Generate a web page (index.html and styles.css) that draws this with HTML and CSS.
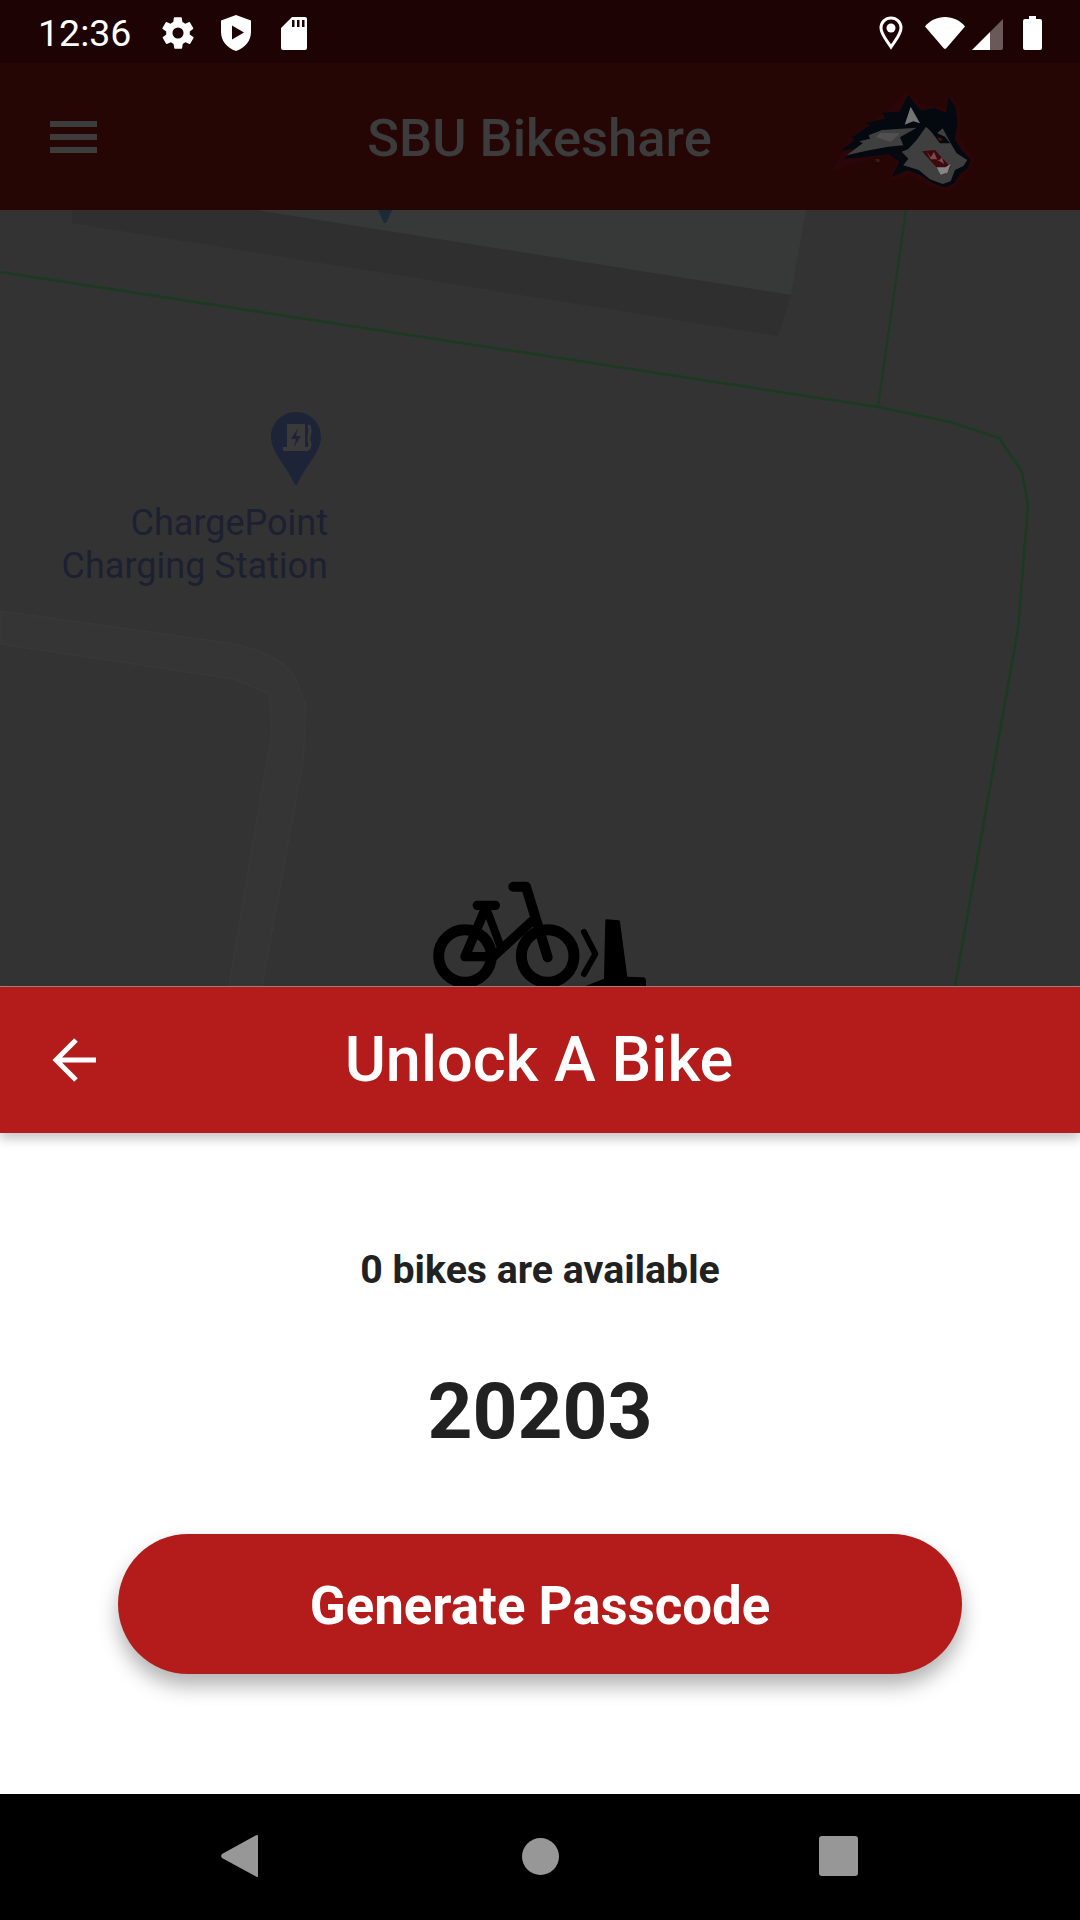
FILE: index.html
```html
<!DOCTYPE html>
<html lang="en">
<head>
<meta charset="utf-8">
<title>SBU Bikeshare</title>
<link rel="stylesheet" href="styles.css">
</head>
<body>
<div class="screen">
  <header class="status">
    <div class="status-left">
      <span class="time">12:36</span>
      <svg class="si gear" viewBox="0 0 24 24"><path fill="#fff" d="M19.4 13a7.8 7.8 0 0 0 0-2l2.1-1.6a.5.5 0 0 0 .1-.6l-2-3.5a.5.5 0 0 0-.6-.2l-2.5 1a7.3 7.3 0 0 0-1.7-1l-.4-2.6a.5.5 0 0 0-.5-.4h-4a.5.5 0 0 0-.5.4l-.4 2.6a7.3 7.3 0 0 0-1.7 1l-2.5-1a.5.5 0 0 0-.6.2l-2 3.5a.5.5 0 0 0 .1.6L4.600 11a7.800 7.800 0 0 0 0 2l-2.100 1.600a.5.5 0 0 0-.1.6l2 3.500a.5.5 0 0 0 .6.2l2.500-1c.5.4 1.100.7 1.700 1l.4 2.600a.5.5 0 0 0 .5.4h4a.5.5 0 0 0 .5-.4l.4-2.600c.6-.3 1.200-.6 1.700-1l2.500 1a.5.5 0 0 0 .6-.2l2-3.500a.5.5 0 0 0-.1-.6zM12 15.500a3.500 3.500 0 1 1 0-7 3.500 3.500 0 0 1 0 7z"/></svg>
      <svg class="si shield" viewBox="0 0 30 36"><path fill="#fff" fill-rule="evenodd" d="M15 0 30 5.500V17c0 9-6.200 16-15 19C6.200 33 0 26 0 17V5.500zM11 10.500v14L23 17.500z"/></svg>
      <svg class="si sd" viewBox="0 0 26 33"><path fill="#fff" fill-rule="evenodd" d="M11 0h13a2 2 0 0 1 2 2v29a2 2 0 0 1-2 2H2a2 2 0 0 1-2-2V11zM11 3v7h2.500V3zM16 3v7h2.500V3zM21 3v7h2.500V3z"/></svg>
    </div>
    <div class="status-right">
      <svg class="si loc" viewBox="0 0 24 34"><path fill="none" stroke="#fff" stroke-width="3" d="M12 2C6.200 2 2 6.400 2 12c0 6.500 6 12.500 10 19 4-6.500 10-12.500 10-19C22 6.400 17.800 2 12 2z"/><circle cx="12" cy="12" r="4.500" fill="#fff"/></svg>
      <svg class="si wifi" viewBox="0 0 40 32"><path fill="#fff" d="M0 9.500C5 3.500 12 0 20 0s15 3.500 20 9.500L21.500 31a2 2 0 0 1-3 0z"/></svg>
      <svg class="si signal" viewBox="0 0 31 32"><path fill="#fff" d="M0 32 18 14v18z"/><path fill="#6b5858" d="M18 14 31 1v29a2 2 0 0 1-2 2H18z"/></svg>
      <svg class="si batt" viewBox="0 0 19 34"><path fill="#fff" d="M6 0h7v3h4a2 2 0 0 1 2 2v27a2 2 0 0 1-2 2H2a2 2 0 0 1-2-2V5a2 2 0 0 1 2-2h4z"/></svg>
    </div>
  </header>

  <div class="appbar">
    <div class="burger"><span></span><span></span><span></span></div>
    <div class="app-title">SBU Bikeshare</div>
    <svg class="wolf" viewBox="0 0 510 360">
      <path fill="#2a0608" d="M35 275 85 175 190 100 260 32 300 72 375 85 385 38 420 80 420 175 465 240 430 295 385 335 330 320 270 285 205 305 230 250 200 225 120 245z"/>
      <path fill="#03090f" d="M62 212 104 180 95 172 150 136 136 130 195 116 188 98 238 95 265 45 285 72 305 92 342 84 378 98 386 50 407 82 412 130 404 178 428 215 452 240 444 264 420 282 402 310 376 322 340 310 300 284 262 270 216 290 238 246 205 222 130 232 72 236 104 206z"/>
      <path fill="#3f3f3f" d="M80 226 128 190 118 184 150 176 146 166 186 150 290 143 240 172 250 196 205 200 140 212z"/>
      <path fill="#505050" d="M180 158 240 160 212 186 168 172z"/>
      <path fill="#747474" d="M254 134 272 80 300 130 280 124z"/>
      <path fill="#3f3f3f" d="M245 215 264 208 290 180 318 140 345 165 368 145 392 190 410 220 442 240 430 258 405 270 392 304 368 312 330 298 296 270 250 256 265 236z"/>
      <path fill="#3c0a0d" d="M306 214 345 210 392 262 372 284 338 250z"/>
      <path fill="#858585" d="M350 262 376 262 392 252 382 278 362 284z"/>
      <path fill="#7a4a4c" d="M320 214 332 232 342 216 354 244 366 232 372 252 350 238 332 238z"/>
      <path fill="#03090f" d="M330 150 375 170 390 190 360 190z"/>
      <path fill="#640e11" d="M352 170 368 178 360 184z"/>
      <text class="tm" x="165" y="246">TM</text>
    </svg>
  </div>

  <main class="map">
    <svg class="map-art" viewBox="0 210 1080 776">
      <path fill="#363938" d="M255 210H806L791 295z"/>
      <path fill="#2f2f2f" d="M72 210V223L778 336 791 295 255 210z"/>
      <path fill="#353535" stroke="#383838" stroke-width="1.500" d="M0 611 234 644Q262 650 275 659 290 668 296 680L306 705 303 761 262 986H229L272 731 269 694 234 679 0 644z"/>
      <path fill="none" stroke="#1a3a22" stroke-width="2.500" d="M0 272 878 407 950 422 999 438 1022 472 1028 506 1018 629 955 986"/>
      <path fill="none" stroke="#1a3a22" stroke-width="2" d="M906 210 878 407"/>
      <path fill="#1c2a38" d="M378 210h14l-5 11a2 2 0 0 1-4 0z"/>
      <path fill="#1e2438" d="M296 412c14 0 25 11 25 25 0 15-15 28-23 46a2 2 0 0 1-4 0c-8-18-23-31-23-46 0-14 11-25 25-25z"/>
      <path fill="#3a3a3a" fill-rule="evenodd" d="M287 424h18v23h3v4h-25v-4h4zM298 428l-7 11h5l-2 8 7-11h-5z"/>
      <path fill="none" stroke="#3a3a3a" stroke-width="3" stroke-linecap="round" d="M309 426c3 6-1 9 0 14 1 4 2 6-1 9"/>
      <g transform="translate(400 850) scale(.3333)" fill="none" stroke="#000" stroke-linecap="round" stroke-linejoin="round">
        <circle cx="195" cy="318" r="79" stroke-width="33"/>
        <circle cx="443" cy="318" r="79" stroke-width="33"/>
        <path stroke-width="30" d="M340 110H378L443 322"/>
        <path stroke-width="28" d="M232 166H286"/>
        <path stroke-width="28" d="M258 172 195 320H280L405 205"/>
        <path stroke-width="24" d="M258 172 300 285"/>
        <path stroke-width="18" d="M552 246 586 312 552 372"/>
        <path fill="#000" stroke="none" d="M616 212q0-4 4-4l36 3q4 0 4 4l22 165 50 2q6 2 6 10v30H552v-12l60-24z"/>
      </g>
    </svg>
    <div class="poi">ChargePoint<br>Charging Station</div>
  </main>

  <section class="sheet">
    <div class="sheet-head">
      <svg class="back" viewBox="0 0 44 44"><path fill="none" stroke="#fff" stroke-width="5" d="M44 22H5M24 2 4 22 24 42"/></svg>
      <div class="sheet-title">Unlock A Bike</div>
    </div>
    <div class="sheet-body">
      <p class="avail">0 bikes are available</p>
      <p class="code">20203</p>
      <div class="cta">Generate Passcode</div>
    </div>
  </section>

  <footer class="nav">
    <svg class="nb back-tri" viewBox="0 0 37 42"><path fill="#979797" d="M36 0a1 1 0 0 1 1 1v40a1 1 0 0 1-1.500.800L1 23a3 3 0 0 1 0-4L35 .3z"/></svg>
    <span class="nb home"></span>
    <span class="nb square"></span>
  </footer>
</div>
</body>
</html>
```

FILE: styles.css
```css
* { box-sizing: border-box; }
html, body { margin: 0; padding: 0; }
body { width: 1080px; height: 1920px; overflow: hidden; font-family: Roboto, "Noto Sans", sans-serif; background: #fff; }
.screen { width: 1080px; height: 1920px; display: flex; flex-direction: column; }

.status { height: 63px; flex: none; background: #1e0304; display: flex; justify-content: space-between; align-items: center; padding: 3px 38px 0 38px; }
.status-left, .status-right { display: flex; align-items: center; }
.time { color: #fff; font-size: 37.5px; line-height: 40px; width: 92px; margin-right: 29px; white-space: nowrap; }
.si { display: block; flex: none; }
.gear { width: 38px; height: 38px; }
.shield { width: 30px; height: 36px; margin-left: 24px; }
.sd { width: 26px; height: 33px; margin-left: 30px; }
.loc { width: 24px; height: 34px; margin-right: 22px; }
.wifi { width: 40px; height: 32px; margin-right: 7px; }
.signal { width: 31px; height: 32px; margin-right: 20px; margin-top: 1px; }
.batt { width: 19px; height: 34px; }

.appbar { height: 147px; flex: none; background: #260505; display: grid; grid-template-columns: 1fr auto 1fr; align-items: center; padding: 0 50px; }
.burger { display: flex; flex-direction: column; gap: 7px; width: 47px; }
.burger span { display: block; height: 6px; background: #3c3c3c; }
.app-title { color: #3c3c3c; font-size: 52.500px; font-weight: 500; line-height: 60px; white-space: nowrap; padding: 2px 1px 0 0; }
.wolf { width: 170px; height: 120px; justify-self: end; margin-right: 40px; margin-top: 7px; }
.tm { fill: #4a4a4a; font-family: Roboto, sans-serif; font-size: 9px; }

.map { flex: 1; position: relative; overflow: hidden; background: #333; }
.map-art { position: absolute; left: 0; top: 0; width: 1080px; height: 776px; display: block; }
.poi { position: absolute; right: 752px; top: 292px; text-align: right; color: #1c2030; font-size: 36px; line-height: 43px; white-space: nowrap; }

.sheet { flex: none; background: #fff; }
.sheet-head { height: 147px; background: #b41c1c; border-top: 1px solid #9b8080; display: grid; grid-template-columns: 1fr auto 1fr; align-items: center; padding: 0 52px; box-shadow: 0 6px 10px rgba(0,0,0,.22); position: relative; }
.back { width: 44px; height: 44px; display: block; }
.sheet-title { color: #fff; font-size: 63px; font-weight: 500; line-height: 72px; white-space: nowrap; padding-right: 2px; }
.sheet-body { height: 661px; display: flex; flex-direction: column; align-items: center; padding-top: 114px; }
.avail { margin: 0; color: #212121; font-size: 39.300px; font-weight: 700; line-height: 46px; }
.code { margin: 73px 0 0; color: #212121; font-size: 78.500px; font-weight: 700; line-height: 90px; }
.cta { margin-top: 78px; width: 844px; height: 140px; border-radius: 70px; background: #b41c1c; color: #fff; font-size: 52.800px; font-weight: 700; display: flex; align-items: center; justify-content: center; padding-top: 3px; box-shadow: 0 12px 20px rgba(0,0,0,.3); }

.nav { height: 126px; flex: none; background: #000; display: flex; align-items: center; justify-content: center; padding: 0 2px 2px 0; }
.nb { display: block; flex: none; background: #979797; }
.back-tri { width: 37px; height: 42px; background: none; margin-right: 264px; }
.home { width: 37px; height: 37px; border-radius: 50%; }
.square { width: 39px; height: 40px; border-radius: 3px; margin-left: 260px; }
```
